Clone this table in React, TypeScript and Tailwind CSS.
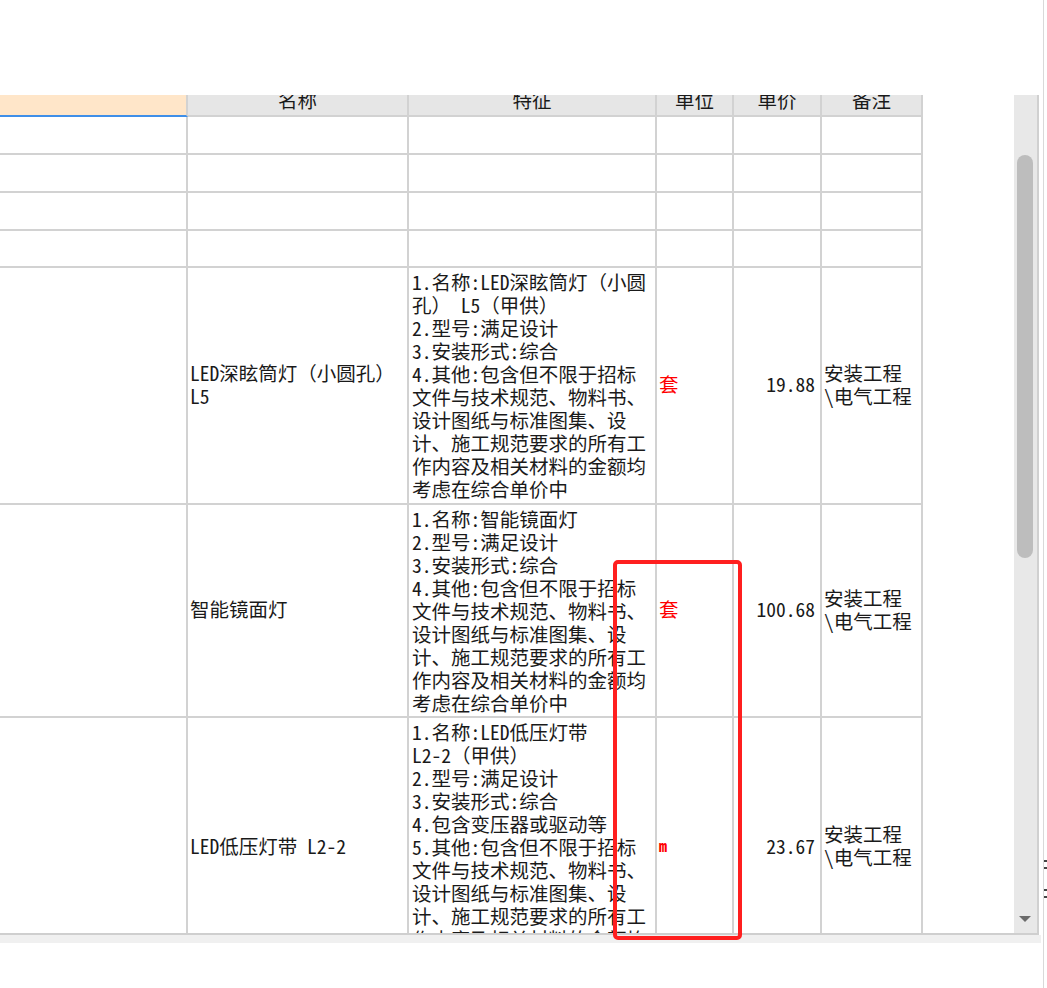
import React from "react";

const cols = "grid grid-cols-[188px_221px_248px_77px_88px_101px] w-[923px]";
const cell = "border-r-2 border-b-2 border-[#d2d2d2]";

type Row = {
  h: string;
  name: string[];
  feat: string[];
  unit: string;
  unitSmall?: boolean;
  price: string;
  remark: string[];
};

const rows: Row[] = [
  {
    h: "h-[237px]",
    name: ["LED深眩筒灯（小圆孔）", "L5"],
    feat: [
      "1.名称:LED深眩筒灯（小圆",
      "孔） L5（甲供）",
      "2.型号:满足设计",
      "3.安装形式:综合",
      "4.其他:包含但不限于招标",
      "文件与技术规范、物料书、",
      "设计图纸与标准图集、设",
      "计、施工规范要求的所有工",
      "作内容及相关材料的金额均",
      "考虑在综合单价中",
    ],
    unit: "套",
    price: "19.88",
    remark: ["安装工程", "\\电气工程"],
  },
  {
    h: "h-[213px]",
    name: ["智能镜面灯"],
    feat: [
      "1.名称:智能镜面灯",
      "2.型号:满足设计",
      "3.安装形式:综合",
      "4.其他:包含但不限于招标",
      "文件与技术规范、物料书、",
      "设计图纸与标准图集、设",
      "计、施工规范要求的所有工",
      "作内容及相关材料的金额均",
      "考虑在综合单价中",
    ],
    unit: "套",
    price: "100.68",
    remark: ["安装工程", "\\电气工程"],
  },
  {
    h: "h-[260px]",
    name: ["LED低压灯带 L2-2"],
    feat: [
      "1.名称:LED低压灯带",
      "L2-2（甲供）",
      "2.型号:满足设计",
      "3.安装形式:综合",
      "4.包含变压器或驱动等",
      "5.其他:包含但不限于招标",
      "文件与技术规范、物料书、",
      "设计图纸与标准图集、设",
      "计、施工规范要求的所有工",
      "作内容及相关材料的金额均",
      "考虑在综合单价中",
    ],
    unit: "m",
    unitSmall: true,
    price: "23.67",
    remark: ["安装工程", "\\电气工程"],
  },
];

const headers = ["名称", "特征", "单位", "单价", "备注"];
const emptyHeights = ["h-[38px]", "h-[38px]", "h-[38px]", "h-[37px]"];

function Lines({ lines }: { lines: string[] }) {
  return (
    <div>
      {lines.map((l, i) => (
        <div key={i} className="whitespace-pre">
          {l}
        </div>
      ))}
    </div>
  );
}

export default function App() {
  return (
    <div className="relative w-[1047px] h-[988px] bg-white flex overflow-hidden text-[19.5px] leading-[23px] text-[#1a1a1a] font-[family-name:'Noto_Sans_Mono_CJK_SC','Noto_Sans_CJK_SC',sans-serif]">
      <div className="w-[1043px] flex flex-col shrink-0">
        <div className="h-[95px] shrink-0" />
        <div className="h-[838px] flex shrink-0">
          <div className="w-[1014px] overflow-hidden shrink-0">
            <div className="mt-[-15px]">
              {/* header */}
              <div className={`${cols} h-[37px]`}>
                <div className="bg-[#ffe6c9] border-r-2 border-r-[#d2d2d2] border-b-2 border-b-[#3f8fe8]" />
                {headers.map((h) => (
                  <div
                    key={h}
                    className={`${cell} bg-[#e6e6e6] flex items-center justify-center pt-[3px]`}
                  >
                    {h}
                  </div>
                ))}
              </div>
              {/* empty rows */}
              {emptyHeights.map((h, i) => (
                <div key={i} className={`${cols} ${h}`}>
                  {[0, 1, 2, 3, 4, 5].map((c) => (
                    <div key={c} className={cell} />
                  ))}
                </div>
              ))}
              {/* data rows */}
              {rows.map((r, i) => (
                <div key={i} className={`${cols} ${r.h}`}>
                  <div className={cell} />
                  <div className={`${cell} flex items-center pl-[2px] pb-[4px]`}>
                    <Lines lines={r.name} />
                  </div>
                  <div className={`${cell} pl-[3px] pt-[2px]`}>
                    <Lines lines={r.feat} />
                  </div>
                  <div
                    className={`${cell} flex items-center pl-[2px] pb-[4px] text-[#ff0000] ${
                      r.unitSmall ? "text-[16px] font-semibold" : ""
                    }`}
                  >
                    {r.unit}
                  </div>
                  <div className={`${cell} flex items-center justify-end pr-[5px] pb-[4px]`}>
                    {r.price}
                  </div>
                  <div className={`${cell} flex items-center pl-[2px] pb-[4px]`}>
                    <Lines lines={r.remark} />
                  </div>
                </div>
              ))}
            </div>
          </div>
          {/* vertical scrollbar */}
          <div className="w-[25px] shrink-0 bg-[#e8e8e8] border-r-2 border-[#d0d0d0] flex flex-col">
            <div className="mt-[60px] ml-[3px] w-[16px] h-[403px] rounded-full bg-[#bdbdbd]" />
            <div className="flex-1" />
            <div className="flex justify-center pb-[11px] pr-[1px]">
              <svg width="12" height="6" viewBox="0 0 12 6">
                <path d="M0 0 L12 0 L6 6 Z" fill="#6b6b6b" />
              </svg>
            </div>
          </div>
          <div className="w-[4px] shrink-0" />
        </div>
        <div className="h-[2px] w-[1039px] bg-[#cfcfcf] shrink-0" />
        <div className="h-[8px] w-[1041px] bg-[#f0f0f0] shrink-0" />
        <div className="flex-1" />
      </div>
      <div className="w-px shrink-0 bg-[#d9d9d9]" />
      <div className="flex-1 flex flex-col pt-[860px] gap-[5px]">
        <div className="h-[2px] w-[3px] bg-[#444]" />
        <div className="h-[2px] w-[3px] bg-[#444]" />
        <div className="h-[10px]" />
        <div className="h-[2px] w-[3px] bg-[#444]" />
        <div className="h-[2px] w-[3px] bg-[#444]" />
      </div>
      {/* red annotation */}
      <div className="absolute left-[613px] top-[560px] w-[129px] h-[380px] border-4 border-[#ff1f1f] rounded-[5px]" />
    </div>
  );
}
